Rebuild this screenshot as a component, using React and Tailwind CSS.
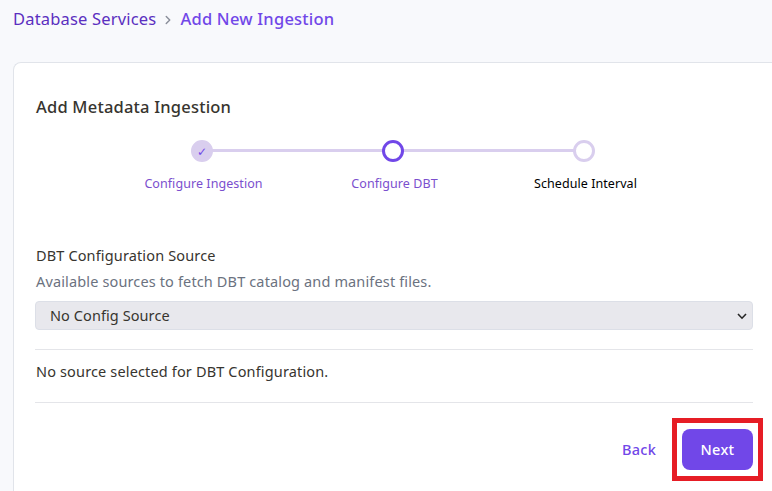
import React from "react";
import { ChevronRight } from "lucide-react";

const steps = [
  { label: "Configure Ingestion", state: "done" },
  { label: "Configure DBT", state: "active" },
  { label: "Schedule Interval", state: "todo" },
];

function Step({ label, state, last }) {
  const circle = {
    done: "bg-[#d9ceee] border-[#d9ceee]",
    active: "bg-white border-[#7147e8]",
    todo: "bg-white border-[#d9ceee]",
  }[state];
  return (
    <li className="relative flex w-[191px] flex-col items-center">
      {!last && <span className="absolute left-1/2 top-[9px] h-[3px] w-full bg-[#d9ceee]" />}
      <span className={`relative flex h-[22px] w-[22px] items-center justify-center rounded-full border-[3px] ${circle}`}>
        {state === "done" && (
          <span className="pt-px font-['DejaVu_Sans',sans-serif] text-[12px] leading-none text-[#7147e8]">✓</span>
        )}
      </span>
      <span
        className={`mt-3 whitespace-nowrap pl-[3px] text-[12.5px] leading-[20px] tracking-[0.06px] ${
          state === "todo" ? "text-black" : "text-[#7b4fce]"
        }`}
      >
        {label}
      </span>
    </li>
  );
}

export default function App() {
  return (
    <div className="h-[491px] w-[772px] overflow-hidden bg-[#f8f9fc] font-['Noto_Sans',sans-serif] text-[#37352f]">
      <nav className="flex h-[62px] items-start pl-[13px] pt-[7px] text-[16.5px] leading-[24px]">
        <span className="whitespace-nowrap tracking-[0.18px] text-[#5b2fc0]">Database Services</span>
        <ChevronRight className="ml-[5px] mr-[5px] mt-[6px] h-[14px] w-[14px] text-[#8b8f9b]" strokeWidth={2.5} />
        <span className="whitespace-nowrap font-medium tracking-[0.22px] text-[#7147e8]">Add New Ingestion</span>
      </nav>
      <main className="ml-[13px] h-[440px] w-[759px] rounded-tl-lg border-l border-t border-[#e1e4ea] bg-white pl-[21px] pr-[19px] pt-[32px]">
        <h1 className="pl-px text-[16.5px] font-medium leading-[24px] tracking-[0.2px]">Add Metadata Ingestion</h1>
        <ol className="ml-[71.5px] mt-[21px] flex">
          {steps.map((step, i) => (
            <Step key={step.label} {...step} last={i === steps.length - 1} />
          ))}
        </ol>
        <div className="mt-[50px] text-[14.5px] leading-[22px] tracking-[0.14px]">
          <label className="block pl-px">DBT Configuration Source</label>
          <p className="mt-1 pl-px text-[#6b7280]">Available sources to fetch DBT catalog and manifest files.</p>
        </div>
        <div className="mt-[9px] flex h-[29px] items-center justify-between rounded border border-[#dcdfe7] bg-[#e8e8ed] pl-[14px] pr-[5px] text-[14.5px] tracking-[0.08px]">
          <span>No Config Source</span>
          <svg className="h-[10px] w-[10px]" viewBox="0 0 10 10" fill="none" stroke="#262626" strokeWidth="1.6">
            <path d="M1 3 5 7.2 9 3" />
          </svg>
        </div>
        <div className="mt-[19px] flex h-[54px] items-start border-y border-[#e4e5e9] pl-px pt-[10px] text-[14.5px] leading-[22px] tracking-[0.15px]">
          No source selected for DBT Configuration.
        </div>
        <div className="mr-[-10px] mt-[15px] flex items-center justify-end">
          <button className="mr-[16px] text-[14.5px] font-medium tracking-[0.25px] text-[#7147e8]">Back</button>
          <div className="flex h-[63px] w-[91px] items-center justify-center border-[5px] border-[#e61d25]">
            <button className="h-[41px] w-[71px] rounded-lg bg-[#7147e8] text-[14.5px] font-medium tracking-[0.3px] text-white">
              Next
            </button>
          </div>
        </div>
      </main>
    </div>
  );
}
